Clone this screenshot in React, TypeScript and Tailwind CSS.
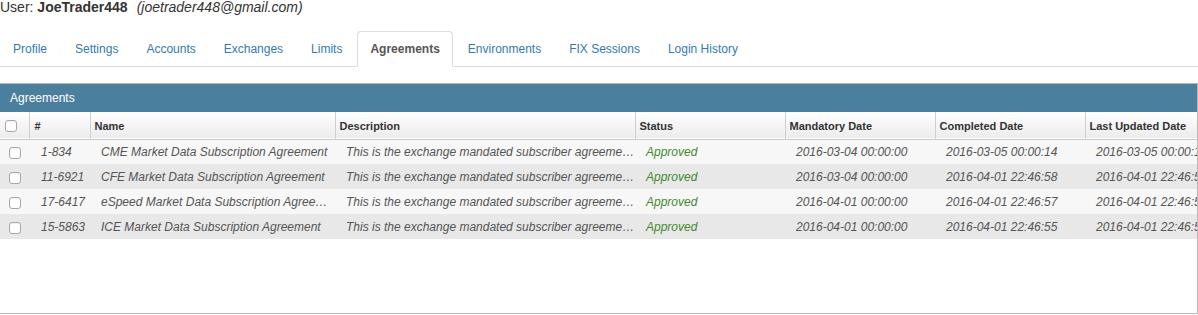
import { useState } from 'react'

const tabs = [
  'Profile',
  'Settings',
  'Accounts',
  'Exchanges',
  'Limits',
  'Agreements',
  'Environments',
  'FIX Sessions',
  'Login History',
]

const agreements = [
  {
    id: '1-834',
    name: 'CME Market Data Subscription Agreement',
    mandatory: '2016-03-04 00:00:00',
    completed: '2016-03-05 00:00:14',
    updated: '2016-03-05 00:00:14',
  },
  {
    id: '11-6921',
    name: 'CFE Market Data Subscription Agreement',
    mandatory: '2016-03-04 00:00:00',
    completed: '2016-04-01 22:46:58',
    updated: '2016-04-01 22:46:58',
  },
  {
    id: '17-6417',
    name: 'eSpeed Market Data Subscription Agreement',
    mandatory: '2016-04-01 00:00:00',
    completed: '2016-04-01 22:46:57',
    updated: '2016-04-01 22:46:57',
  },
  {
    id: '15-5863',
    name: 'ICE Market Data Subscription Agreement',
    mandatory: '2016-04-01 00:00:00',
    completed: '2016-04-01 22:46:55',
    updated: '2016-04-01 22:46:55',
  },
]

const description = 'This is the exchange mandated subscriber agreement for market data access'

// Mac style checkbox drawn as a box so it renders the same everywhere
function Box({ checked, onClick }: { checked: boolean; onClick: () => void }) {
  return (
    <span
      onClick={onClick}
      className="block w-[12px] h-[12px] rounded-[3px] border border-[#a8a8a8] bg-white shadow-[inset_0_1px_1px_rgba(0,0,0,0.06)] cursor-pointer"
    >
      {checked && <span className="block w-full h-full rounded-[2px] bg-[#4b7f9e]" />}
    </span>
  )
}

export default function App() {
  const [active, setActive] = useState('Agreements')
  const [selected, setSelected] = useState<Record<string, boolean>>({})

  const allChecked = agreements.every(a => selected[a.id])

  function toggleAll() {
    const next: Record<string, boolean> = {}
    for (const a of agreements) next[a.id] = !allChecked
    setSelected(next)
  }

  return (
    <div className="w-[1198px] h-[315px] overflow-hidden bg-white font-['Liberation_Sans',Arial,sans-serif] text-[#333]">
      {/* User line */}
      <div className="h-[14px] text-[14px] leading-[14px] text-[#333] whitespace-nowrap">
        User: <span className="font-bold">JoeTrader448</span>
        <span className="italic ml-[9px]">(joetrader448@gmail.com)</span>
      </div>

      {/* Tabs */}
      <ul className="mt-[17px] flex border-b border-[#ddd] h-[36px]">
        {tabs.map(t => (
          <li key={t} className="mr-[2px] -mb-px">
            <button
              onClick={() => setActive(t)}
              className={`h-[36px] px-[12px] text-[12px] leading-[33px] rounded-t-[4px] border ${
                active === t
                  ? 'bg-white border-[#ddd] border-b-white text-[#555] font-bold'
                  : 'border-transparent text-[#337ab7] hover:bg-[#eee]'
              }`}
            >
              {t}
            </button>
          </li>
        ))}
      </ul>

      {/* Agreements panel */}
      <div className="mt-[16px] h-[231px] border-t border-r border-b border-[#b8b8b8] overflow-hidden">
        <div className="h-[28px] bg-[#4b7f9e] text-white text-[12px] leading-[29px] pl-[10px]">
          Agreements
        </div>
        <table className="table-fixed border-collapse w-[1260px] text-[12px]">
          <colgroup>
            <col className="w-[29px]" />
            <col className="w-[61px]" />
            <col className="w-[245px]" />
            <col className="w-[300px]" />
            <col className="w-[150px]" />
            <col className="w-[150px]" />
            <col className="w-[150px]" />
            <col className="w-[175px]" />
          </colgroup>
          <thead>
            <tr className="h-[27px] bg-gradient-to-b from-white to-[#ececec] border-b border-[#c8c8c8] text-left text-[11px] font-bold text-[#333]">
              <th className="pl-[5px] pt-[1px] border-r border-[#d0d0d0]">
                <Box checked={allChecked} onClick={toggleAll} />
              </th>
              <th className="pl-[5px] pt-[2px] border-r border-[#d0d0d0]">#</th>
              <th className="pl-[4px] pt-[2px] border-r border-[#d0d0d0]">Name</th>
              <th className="pl-[4px] pt-[2px] border-r border-[#d0d0d0]">Description</th>
              <th className="pl-[4px] pt-[2px] border-r border-[#d0d0d0]">Status</th>
              <th className="pl-[4px] pt-[2px] border-r border-[#d0d0d0]">Mandatory Date</th>
              <th className="pl-[4px] pt-[2px] border-r border-[#d0d0d0]">Completed Date</th>
              <th className="pl-[4px] pt-[2px]">Last Updated Date</th>
            </tr>
          </thead>
          <tbody className="italic text-[#555]">
            {agreements.map((a, i) => (
              <tr key={a.id} className={`h-[25px] ${i % 2 === 0 ? 'bg-[#f7f7f7]' : 'bg-[#e8e8e8]'}`}>
                <td className="pl-[9px] pt-[2px]">
                  <Box
                    checked={!!selected[a.id]}
                    onClick={() => setSelected(prev => ({ ...prev, [a.id]: !prev[a.id] }))}
                  />
                </td>
                <td className="pl-[12px] whitespace-nowrap">{a.id}</td>
                <td className="pl-[11px] pr-[6px] whitespace-nowrap overflow-hidden text-ellipsis">
                  {a.name}
                </td>
                <td className="pl-[11px] pr-0 whitespace-nowrap overflow-hidden text-ellipsis">
                  {description}
                </td>
                <td className="pl-[11px] text-[#438a2f]">Approved</td>
                <td className="pl-[11px] whitespace-nowrap">{a.mandatory}</td>
                <td className="pl-[11px] whitespace-nowrap">{a.completed}</td>
                <td className="pl-[11px] whitespace-nowrap">{a.updated}</td>
              </tr>
            ))}
          </tbody>
        </table>
      </div>
    </div>
  )
}
